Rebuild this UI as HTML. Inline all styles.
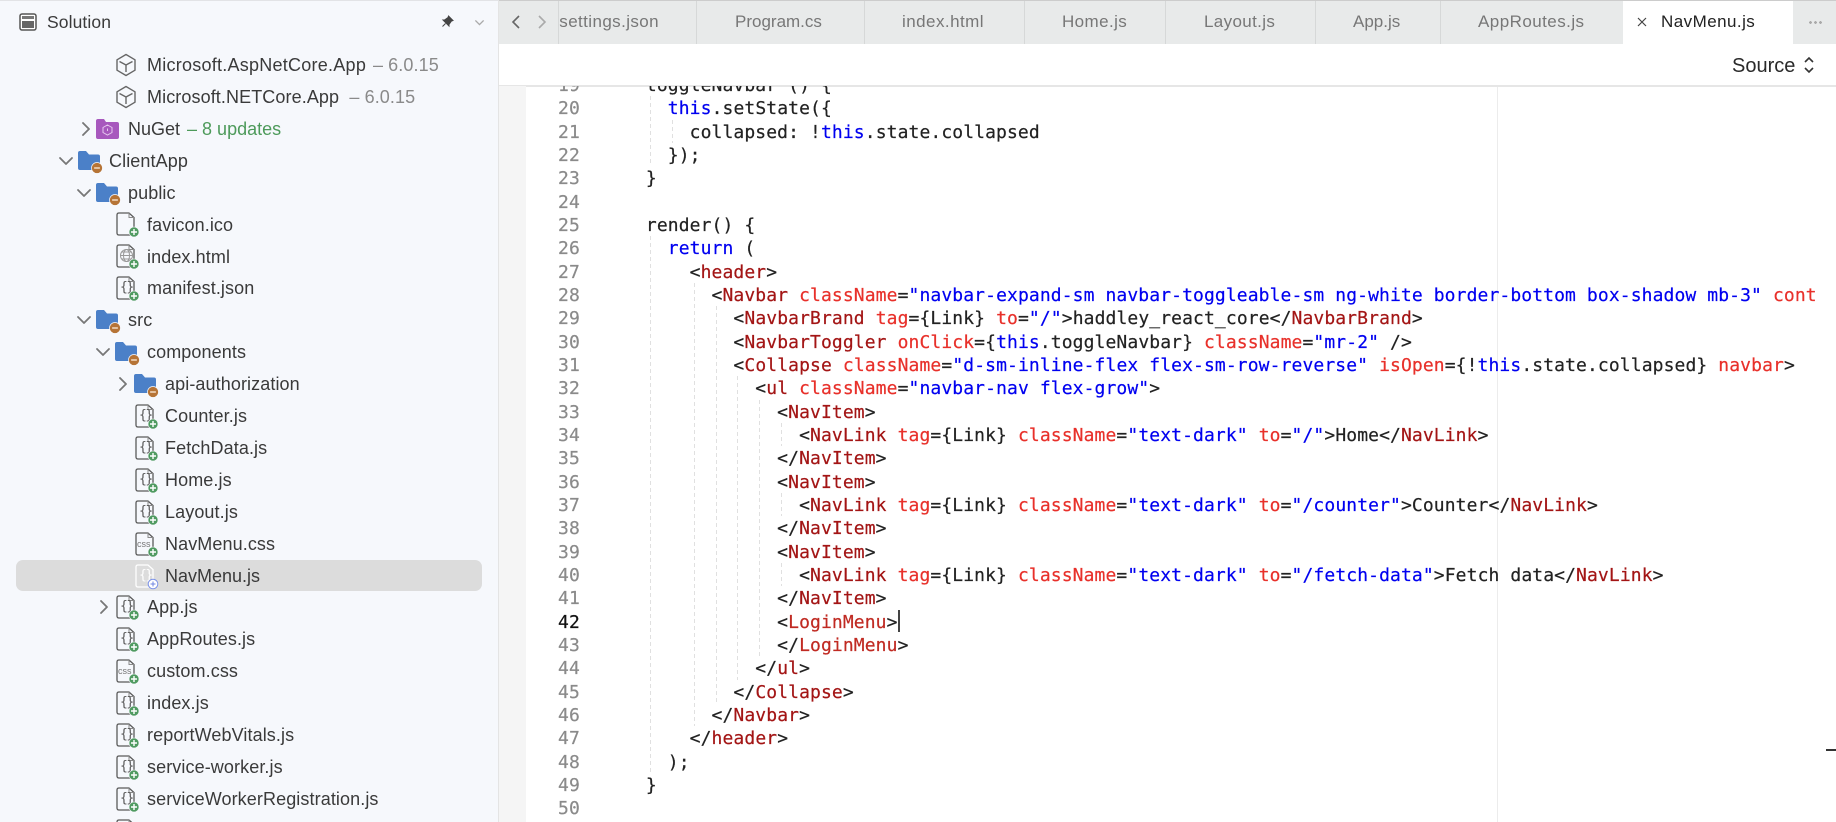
<!DOCTYPE html>
<html><head><meta charset="utf-8"><title>NavMenu.js</title>
<style>
*{box-sizing:border-box}
html,body{margin:0;padding:0;width:1836px;height:822px;overflow:hidden;background:#fff}
body{position:relative;font-family:"Liberation Sans",sans-serif}
.abs{position:absolute}
#side{position:absolute;left:0;top:0;width:499px;height:822px;background:#f6f8fc;border-right:1px solid #e4e4e4;border-top:1px solid #e2e3e6;overflow:hidden}
#inner{position:absolute;left:0;top:-1px;width:498px;height:822px}
.r{position:absolute;height:32px;line-height:32px;font-size:18px;color:#3a3a3a;white-space:nowrap;letter-spacing:.1px}
.r i{font-style:normal;color:#8a8a8a}
.r b{font-weight:normal;color:#4d9a5a}
svg.ic{position:absolute;overflow:visible}
svg.ic:has(use[href="#plus"]){margin-top:-1px}
svg.ic:has(use[href="#mbadge"]){transform:scale(1.15)}
#tabs{position:absolute;left:499px;top:0;width:1337px;height:44px;background:#e8eaea;border-top:1px solid #ccc}
.tab{position:absolute;top:21px;transform:translateY(-50%);font-size:17px;color:#777;white-space:nowrap}
.sep{position:absolute;top:0;width:1px;height:43px;background:#d6d8d8}
pre{margin:0;font-family:"DejaVu Sans Mono",monospace;font-size:18px;letter-spacing:.105px;line-height:23.333px;position:absolute;-webkit-text-stroke:.2px}
#clip{position:absolute;left:499px;top:86px;width:1337px;height:736px;overflow:hidden}
.t{color:#a31515}.a{color:#e8302a}.s{color:#0000f0}.l{color:#c02a22}
.b{position:absolute;font:13px/16px "DejaVu Sans Mono",monospace;color:#555;letter-spacing:-1.500px}
.c{position:absolute;font:9px/16px "Liberation Sans",sans-serif;color:#777}
</style></head><body>
<svg width="0" height="0" style="position:absolute">
<defs>
<symbol id="file" viewBox="0 0 24 26" overflow="visible"><path d="M4 1H14L19 5.500V23H4Q2 23 2 21V3Q2 1 4 1Z" fill="none" stroke="#5a5a5a" stroke-width="1.300"/><path d="M14 1V5.500H19" fill="none" stroke="#8a8a8a" stroke-width="1"/></symbol>
<symbol id="plus" viewBox="0 0 12 12"><circle cx="6" cy="6" r="5" fill="#4f9a60" stroke="#f6f8fc" stroke-width=".6"/><path d="M3 6H9M6 3V9" stroke="#fff" stroke-width="1.400"/></symbol>
<symbol id="fold" viewBox="0 0 24 22"><path d="M1 3Q1 1 3 1H9L12 4.500H21Q23 4.500 23 6.500V18Q23 20 21 20H3Q1 20 1 18Z" fill="#4b80c8"/></symbol>
<symbol id="mbadge" viewBox="0 0 12 12"><circle cx="6" cy="6" r="4.800" fill="#b67436" stroke="#f6f8fc" stroke-width=".6"/><path d="M3.500 6H8.500" stroke="#f3dcc4" stroke-width="1.200"/></symbol>
<symbol id="cube" viewBox="0 0 22 24"><path d="M11 1.500L20 6.800V17.200L11 22.500L2 17.200V6.800Z M4.500 8.500L11 12L17.500 8.500 M11 12V19" fill="none" stroke="#666" stroke-width="1.400" stroke-linejoin="round"/></symbol>
<symbol id="chr" viewBox="0 0 10 16"><path d="M2 2L8 8L2 14" fill="none" stroke="#777" stroke-width="1.800" stroke-linecap="round" stroke-linejoin="round"/></symbol>
<symbol id="chd" viewBox="0 0 16 10"><path d="M2 2L8 8L14 2" fill="none" stroke="#777" stroke-width="1.800" stroke-linecap="round" stroke-linejoin="round"/></symbol>
</defs>
</svg>

<div id="side"><div id="inner">
<svg class="ic" style="left:19px;top:13px" width="18" height="18" viewBox="0 0 18 18"><rect x="1" y="1" width="16" height="16" rx="2" fill="#fff" stroke="#555" stroke-width="1.500"/><rect x="3" y="3" width="12" height="3" fill="#777"/><rect x="3" y="8" width="12" height="7" fill="#666"/></svg>
<div class="r" style="left:47px;top:6px;font-size:17.500px">Solution</div>
<svg class="ic" style="left:441px;top:15px" width="13" height="13" viewBox="0 0 13 13"><path d="M7.500 1L12 5.500L10.500 6L8 9.500L8 11L2 5L3.500 5L7 2.500Z M4.500 8.500L1.500 11.500" fill="#444" stroke="#444" stroke-width="1"/></svg>
<svg class="ic" style="left:474px;top:19px" width="11" height="7" viewBox="0 0 16 10"><path d="M2 2L8 8L14 2" fill="none" stroke="#aaa" stroke-width="2"/></svg>

<svg class="ic" style="left:115px;top:53px" width="22" height="24"><use href="#cube"/></svg>
<div class="r" style="left:147px;top:49px;letter-spacing:.25px">Microsoft.AspNetCore.App <i style="margin-left:-3.500px;letter-spacing:.1px">&nbsp;– 6.0.15</i></div>
<svg class="ic" style="left:115px;top:85px" width="22" height="24"><use href="#cube"/></svg>
<div class="r" style="left:147px;top:81px">Microsoft.NETCore.App <i>&nbsp;– 6.0.15</i></div>

<svg class="ic" style="left:81px;top:121px" width="10" height="16"><use href="#chr"/></svg>
<svg class="ic" style="left:96px;top:119px" width="23" height="20" viewBox="0 0 23 20"><path d="M0 2Q0 0 2 0H8L10 3H21Q23 3 23 5V18Q23 20 21 20H2Q0 20 0 18Z" fill="#a758bd"/><path d="M11.500 6L16 8.500V13.500L11.500 16L7 13.500V8.500Z M11.500 9.500V12" fill="none" stroke="#e6c8ee" stroke-width="1"/></svg>
<div class="r" style="left:128px;top:113px;letter-spacing:0">NuGet <b style="margin-left:-3px">&nbsp;– 8 updates</b></div>

<svg class="ic" style="left:58px;top:156px" width="16" height="10"><use href="#chd"/></svg>
<svg class="ic" style="left:77px;top:150px" width="24" height="22"><use href="#fold"/></svg>
<svg class="ic" style="left:91px;top:162px" width="12" height="12"><use href="#mbadge"/></svg>
<div class="r" style="left:109px;top:145px">ClientApp</div>

<svg class="ic" style="left:76px;top:188px" width="16" height="10"><use href="#chd"/></svg>
<svg class="ic" style="left:95px;top:182px" width="24" height="22"><use href="#fold"/></svg>
<svg class="ic" style="left:109px;top:194px" width="12" height="12"><use href="#mbadge"/></svg>
<div class="r" style="left:128px;top:177px">public</div>

<svg class="ic" style="left:115px;top:212px" width="24" height="26"><use href="#file"/></svg>
<svg class="ic" style="left:128px;top:227px" width="12" height="12"><use href="#plus"/></svg>
<div class="r" style="left:147px;top:209px">favicon.ico</div>

<svg class="ic" style="left:115px;top:244px" width="24" height="26"><use href="#file"/></svg>
<svg class="ic" style="left:119px;top:248px" width="15" height="15" viewBox="0 0 15 15"><circle cx="7.500" cy="7.500" r="6" fill="none" stroke="#999" stroke-width="1"/><ellipse cx="7.500" cy="7.500" rx="3" ry="6" fill="none" stroke="#999" stroke-width="1"/><path d="M1.500 7.500H13.500M2.500 4H12.500M2.500 11H12.500" stroke="#999" stroke-width="1"/></svg>
<svg class="ic" style="left:128px;top:259px" width="12" height="12"><use href="#plus"/></svg>
<div class="r" style="left:147px;top:241px">index.html</div>

<svg class="ic" style="left:115px;top:276px" width="24" height="26"><use href="#file"/></svg><div class="b" style="left:120px;top:280px">{}</div>
<svg class="ic" style="left:128px;top:291px" width="12" height="12"><use href="#plus"/></svg>
<div class="r" style="left:147px;top:272px">manifest.json</div>

<svg class="ic" style="left:76px;top:315px" width="16" height="10"><use href="#chd"/></svg>
<svg class="ic" style="left:95px;top:309px" width="24" height="22"><use href="#fold"/></svg>
<svg class="ic" style="left:109px;top:322px" width="12" height="12"><use href="#mbadge"/></svg>
<div class="r" style="left:128px;top:304px">src</div>

<svg class="ic" style="left:95px;top:347px" width="16" height="10"><use href="#chd"/></svg>
<svg class="ic" style="left:114px;top:341px" width="24" height="22"><use href="#fold"/></svg>
<svg class="ic" style="left:128px;top:354px" width="12" height="12"><use href="#mbadge"/></svg>
<div class="r" style="left:147px;top:336px">components</div>

<svg class="ic" style="left:118px;top:376px" width="10" height="16"><use href="#chr"/></svg>
<svg class="ic" style="left:133px;top:373px" width="24" height="22"><use href="#fold"/></svg>
<svg class="ic" style="left:147px;top:386px" width="12" height="12"><use href="#mbadge"/></svg>
<div class="r" style="left:165px;top:368px">api-authorization</div>

<svg class="ic" style="left:134px;top:404px" width="24" height="26"><use href="#file"/></svg><div class="b" style="left:139px;top:408px">{}</div>
<svg class="ic" style="left:147px;top:419px" width="12" height="12"><use href="#plus"/></svg>
<div class="r" style="left:165px;top:400px">Counter.js</div>

<svg class="ic" style="left:134px;top:436px" width="24" height="26"><use href="#file"/></svg><div class="b" style="left:139px;top:440px">{}</div>
<svg class="ic" style="left:147px;top:451px" width="12" height="12"><use href="#plus"/></svg>
<div class="r" style="left:165px;top:432px">FetchData.js</div>

<svg class="ic" style="left:134px;top:468px" width="24" height="26"><use href="#file"/></svg><div class="b" style="left:139px;top:472px">{}</div>
<svg class="ic" style="left:147px;top:483px" width="12" height="12"><use href="#plus"/></svg>
<div class="r" style="left:165px;top:464px">Home.js</div>

<svg class="ic" style="left:134px;top:500px" width="24" height="26"><use href="#file"/></svg><div class="b" style="left:139px;top:504px">{}</div>
<svg class="ic" style="left:147px;top:515px" width="12" height="12"><use href="#plus"/></svg>
<div class="r" style="left:165px;top:496px">Layout.js</div>

<svg class="ic" style="left:134px;top:532px" width="24" height="26"><use href="#file"/></svg><div class="c" style="left:137px;top:536px">css</div>
<svg class="ic" style="left:147px;top:547px" width="12" height="12"><use href="#plus"/></svg>
<div class="r" style="left:165px;top:528px">NavMenu.css</div>

<div class="abs" style="left:16px;top:560px;width:466px;height:31px;background:#dcdcdc;border-radius:7px"></div>
<svg class="ic" style="left:134px;top:564px" width="24" height="26" viewBox="0 0 24 26"><path d="M4 1H14L19 5.500V23H4Q2 23 2 21V3Q2 1 4 1Z" fill="none" stroke="#fff" stroke-width="1.300"/></svg><div class="b" style="left:139px;top:568px;color:#fff">{}</div>
<svg class="ic" style="left:147px;top:578px" width="12" height="12" viewBox="0 0 12 12"><circle cx="6" cy="6" r="4.800" fill="#fff" stroke="#7d93e8" stroke-width="1"/><path d="M3.500 6H8.500M6 3.500V8.500" stroke="#6f86e0" stroke-width="1"/></svg>
<div class="r" style="left:165px;top:560px;letter-spacing:0">NavMenu.js</div>

<svg class="ic" style="left:99px;top:599px" width="10" height="16"><use href="#chr"/></svg>
<svg class="ic" style="left:115px;top:595px" width="24" height="26"><use href="#file"/></svg><div class="b" style="left:120px;top:599px">{}</div>
<svg class="ic" style="left:128px;top:610px" width="12" height="12"><use href="#plus"/></svg>
<div class="r" style="left:147px;top:591px">App.js</div>

<svg class="ic" style="left:115px;top:627px" width="24" height="26"><use href="#file"/></svg><div class="b" style="left:120px;top:631px">{}</div>
<svg class="ic" style="left:128px;top:642px" width="12" height="12"><use href="#plus"/></svg>
<div class="r" style="left:147px;top:623px">AppRoutes.js</div>

<svg class="ic" style="left:115px;top:659px" width="24" height="26"><use href="#file"/></svg><div class="c" style="left:118px;top:663px">css</div>
<svg class="ic" style="left:128px;top:674px" width="12" height="12"><use href="#plus"/></svg>
<div class="r" style="left:147px;top:655px">custom.css</div>

<svg class="ic" style="left:115px;top:691px" width="24" height="26"><use href="#file"/></svg><div class="b" style="left:120px;top:695px">{}</div>
<svg class="ic" style="left:128px;top:706px" width="12" height="12"><use href="#plus"/></svg>
<div class="r" style="left:147px;top:687px">index.js</div>

<svg class="ic" style="left:115px;top:723px" width="24" height="26"><use href="#file"/></svg><div class="b" style="left:120px;top:727px">{}</div>
<svg class="ic" style="left:128px;top:738px" width="12" height="12"><use href="#plus"/></svg>
<div class="r" style="left:147px;top:719px">reportWebVitals.js</div>

<svg class="ic" style="left:115px;top:755px" width="24" height="26"><use href="#file"/></svg><div class="b" style="left:120px;top:759px">{}</div>
<svg class="ic" style="left:128px;top:770px" width="12" height="12"><use href="#plus"/></svg>
<div class="r" style="left:147px;top:751px">service-worker.js</div>

<svg class="ic" style="left:115px;top:787px" width="24" height="26"><use href="#file"/></svg><div class="b" style="left:120px;top:791px">{}</div>
<svg class="ic" style="left:128px;top:802px" width="12" height="12"><use href="#plus"/></svg>
<div class="r" style="left:147px;top:783px">serviceWorkerRegistration.js</div>

<svg class="ic" style="left:115px;top:819px" width="24" height="26"><use href="#file"/></svg>
</div></div>

<div id="tabs">
<svg class="ic" style="left:11px;top:13px" width="12" height="16" viewBox="0 0 12 16"><path d="M9 2L3 8L9 14" fill="none" stroke="#666" stroke-width="1.600"/></svg>
<svg class="ic" style="left:37px;top:13px" width="12" height="16" viewBox="0 0 12 16"><path d="M3 2L9 8L3 14" fill="none" stroke="#aaa" stroke-width="1.600"/></svg>
<div class="abs" style="left:60px;top:0;width:101px;height:43px;overflow:hidden"><div class="tab" style="right:1px;letter-spacing:.4px">settings.json</div></div>
<div class="sep" style="left:59px"></div>
<div class="sep" style="left:197px"></div>
<div class="tab" style="left:236px">Program.cs</div>
<div class="sep" style="left:365px"></div>
<div class="tab" style="left:403px;letter-spacing:.45px">index.html</div>
<div class="sep" style="left:525px"></div>
<div class="tab" style="left:563px;letter-spacing:.4px">Home.js</div>
<div class="sep" style="left:666px"></div>
<div class="tab" style="left:705px;letter-spacing:.35px">Layout.js</div>
<div class="sep" style="left:816px"></div>
<div class="tab" style="left:854px">App.js</div>
<div class="sep" style="left:941px"></div>
<div class="tab" style="left:979px;letter-spacing:.45px">AppRoutes.js</div>
<div class="abs" style="left:1124px;top:0;width:170px;height:44px;background:#fff"></div>
<svg class="ic" style="left:1137px;top:15px" width="12" height="12" viewBox="0 0 12 12"><path d="M2 2L10 10M10 2L2 10" stroke="#444" stroke-width="1.200"/></svg>
<div class="tab" style="left:1162px;color:#222;letter-spacing:.45px">NavMenu.js</div>
<div class="abs" style="left:1309px;top:20px;width:14px;height:3px;background:radial-gradient(circle,#aaa 1.300px,transparent 1.500px) 0 0/5px 3px"></div>
</div>

<div class="abs" style="left:1732px;top:53px;line-height:26px;font-size:20px;color:#2a2a2a">Source</div>
<svg class="ic" style="left:1803px;top:55px" width="12" height="20" viewBox="0 0 12 20"><path d="M2 7L6 3L10 7M2 13L6 17L10 13" fill="none" stroke="#333" stroke-width="1.600"/></svg>
<div class="abs" style="left:499px;top:85px;width:1337px;height:1.500px;background:#e6e6e6"></div>

<div id="clip">
<div class="abs" style="left:0;top:0;width:27px;height:736px;background:#f5f5f5"></div>
<div class="abs" style="left:998px;top:1px;width:1px;height:735px;background:#ececec"></div>
<svg class="ic" style="left:-499px;top:-86px" width="1836" height="822">
<g stroke="#e0e0e0" stroke-width="1" stroke-dasharray="4 3">
<line x1="650.500" x2="650.500" y1="96" y2="166"/>
<line x1="650.500" x2="650.500" y1="236" y2="774"/>
<line x1="672.500" x2="672.500" y1="120" y2="143"/>
<line x1="694.500" x2="694.500" y1="283" y2="726"/>
<line x1="716.500" x2="716.500" y1="306" y2="703"/>
<line x1="737.500" x2="737.500" y1="376" y2="680"/>
<line x1="759.500" x2="759.500" y1="400" y2="656"/>
<line x1="781.500" x2="781.500" y1="423" y2="446"/>
<line x1="781.500" x2="781.500" y1="493" y2="516"/>
<line x1="781.500" x2="781.500" y1="563" y2="586"/>
</g></svg>
<pre style="left:59px;top:-12px;color:#8a8a8a">19
20
21
22
23
24
25
26
27
28
29
30
31
32
33
34
35
36
37
38
39
40
41
<span style="color:#111">42</span>
43
44
45
46
47
48
49
50</pre>
<pre style="left:125px;top:-12px;color:#222">  toggleNavbar () {
    <span class="s">this</span>.setState({
      collapsed: !<span class="s">this</span>.state.collapsed
    });
  }

  render() {
    <span class="s">return</span> (
      &lt;<span class="t">header</span>&gt;
        &lt;<span class="t">Navbar</span> <span class="a">className</span>=<span class="s">"navbar-expand-sm navbar-toggleable-sm ng-white border-bottom box-shadow mb-3"</span> <span class="a">cont</span>
          &lt;<span class="t">NavbarBrand</span> <span class="a">tag</span>={Link} <span class="a">to</span>=<span class="s">"/"</span>&gt;haddley_react_core&lt;/<span class="t">NavbarBrand</span>&gt;
          &lt;<span class="t">NavbarToggler</span> <span class="a">onClick</span>={<span class="s">this</span>.toggleNavbar} <span class="a">className</span>=<span class="s">"mr-2"</span> /&gt;
          &lt;<span class="t">Collapse</span> <span class="a">className</span>=<span class="s">"d-sm-inline-flex flex-sm-row-reverse"</span> <span class="a">isOpen</span>={!<span class="s">this</span>.state.collapsed} <span class="a">navbar</span>&gt;
            &lt;<span class="t">ul</span> <span class="a">className</span>=<span class="s">"navbar-nav flex-grow"</span>&gt;
              &lt;<span class="t">NavItem</span>&gt;
                &lt;<span class="t">NavLink</span> <span class="a">tag</span>={Link} <span class="a">className</span>=<span class="s">"text-dark"</span> <span class="a">to</span>=<span class="s">"/"</span>&gt;Home&lt;/<span class="t">NavLink</span>&gt;
              &lt;/<span class="t">NavItem</span>&gt;
              &lt;<span class="t">NavItem</span>&gt;
                &lt;<span class="t">NavLink</span> <span class="a">tag</span>={Link} <span class="a">className</span>=<span class="s">"text-dark"</span> <span class="a">to</span>=<span class="s">"/counter"</span>&gt;Counter&lt;/<span class="t">NavLink</span>&gt;
              &lt;/<span class="t">NavItem</span>&gt;
              &lt;<span class="t">NavItem</span>&gt;
                &lt;<span class="t">NavLink</span> <span class="a">tag</span>={Link} <span class="a">className</span>=<span class="s">"text-dark"</span> <span class="a">to</span>=<span class="s">"/fetch-data"</span>&gt;Fetch data&lt;/<span class="t">NavLink</span>&gt;
              &lt;/<span class="t">NavItem</span>&gt;
              &lt;<span class="l">LoginMenu</span>&gt;
              &lt;/<span class="l">LoginMenu</span>&gt;
            &lt;/<span class="t">ul</span>&gt;
          &lt;/<span class="t">Collapse</span>&gt;
        &lt;/<span class="t">Navbar</span>&gt;
      &lt;/<span class="t">header</span>&gt;
    );
  }
</pre>
<div class="abs" style="left:399px;top:524px;width:1.500px;height:22px;background:#444"></div>
</div>
<div class="abs" style="left:1826px;top:749px;width:10px;height:2px;background:#333"></div>
</body></html>
